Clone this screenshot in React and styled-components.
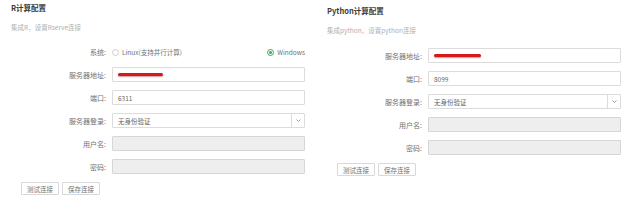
import React from 'react'
import styled, { createGlobalStyle } from 'styled-components'

const GlobalStyle = createGlobalStyle`
  html, body {
    margin: 0;
    padding: 0;
    background: #fff;
  }
  body {
    font-family: "Noto Sans CJK SC", "Liberation Sans", sans-serif;
    -webkit-font-smoothing: antialiased;
  }
`;

const Page = styled.div`
  display: grid;
  grid-template-columns: 316px 316px;
  padding-left: 1px;
  width: 640px;
  height: 203px;
  box-sizing: border-box;
  overflow: hidden;
`;

const Panel = styled.section`
  padding-top: ${(p) => p.$offset}px;
`;

const Title = styled.h3`
  margin: 0 0 0 10px;
  padding-top: 3px;
  font-size: 7.5px;
  line-height: 10px;
  font-weight: 700;
  color: #3a3a3a;
`;

const Subtitle = styled.p`
  margin: 9px 0 0 10px;
  font-size: 6.5px;
  line-height: 10px;
  color: #b0b0b0;
`;

const Form = styled.div`
  margin-top: 13px;
`;

const Row = styled.div`
  display: grid;
  grid-template-columns: 105px 193px;
  column-gap: 6px;
  align-items: center;
  height: ${(p) => (p.$tall ? 14 : 15)}px;
  margin-bottom: 8px;
`;

const Label = styled.label`
  text-align: right;
  font-size: 7px;
  color: #707070;
  white-space: nowrap;
`;

const Input = styled.div`
  height: 15px;
  box-sizing: border-box;
  border: 1px solid ${(p) => (p.$disabled ? '#d6d6d6' : '#dcdcdc')};
  background: ${(p) => (p.$disabled ? '#eeeeee' : '#fff')};
  border-radius: 1px;
  display: flex;
  align-items: center;
  padding-left: 5px;
  font-size: 6.5px;
  color: #666;
`;

const Scribble = styled.span`
  display: inline-block;
  width: ${(p) => p.$w}px;
  height: 3px;
  border-radius: 2px;
  background: #d41a1a;
  box-shadow: 0 1px 1.5px rgba(120, 0, 0, 0.4);
`;

const Select = styled(Input)`
  padding-right: 0;
  justify-content: space-between;
`;

const Caret = styled.span`
  width: 12px;
  height: 100%;
  border-left: 1px solid #dcdcdc;
  display: flex;
  align-items: center;
  justify-content: center;
`;

const Radios = styled.div`
  display: flex;
  justify-content: space-between;
  align-items: center;
`;

const RadioItem = styled.span`
  display: flex;
  align-items: center;
  gap: 3px;
  font-size: 6.5px;
  color: #707070;
`;

const RadioDot = styled.span`
  width: 7px;
  height: 7px;
  box-sizing: border-box;
  border-radius: 50%;
  border: 1px solid ${(p) => (p.$on ? '#3aa655' : '#d0d0d0')};
  display: flex;
  align-items: center;
  justify-content: center;

  &::after {
    content: '';
    width: 3px;
    height: 3px;
    border-radius: 50%;
    background: ${(p) => (p.$on ? '#3aa655' : 'transparent')};
  }
`;

const Buttons = styled.div`
  display: flex;
  gap: 3px;
  margin: 5px 0 0 20px;
`;

const Button = styled.button`
  width: 38px;
  height: 13px;
  padding: 0;
  border: 1px solid #d9d9d9;
  background: #fff;
  border-radius: 1px;
  font-family: inherit;
  font-size: 6.5px;
  color: #707070;
`;

function Chevron() {
  return (
    <svg width="5" height="3" viewBox="0 0 5 3">
      <path d="M0.5 0.5 L2.5 2.5 L4.5 0.5" fill="none" stroke="#888" strokeWidth="0.8" />
    </svg>
  );
}

function ServerFields({ port, scribble }) {
  return (
    <>
      <Row>
        <Label>服务器地址:</Label>
        <Input><Scribble $w={scribble} /></Input>
      </Row>
      <Row>
        <Label>端口:</Label>
        <Input>{port}</Input>
      </Row>
      <Row>
        <Label>服务器登录:</Label>
        <Select>
          无身份验证
          <Caret><Chevron /></Caret>
        </Select>
      </Row>
      <Row>
        <Label>用户名:</Label>
        <Input $disabled />
      </Row>
      <Row>
        <Label>密码:</Label>
        <Input $disabled />
      </Row>
    </>
  );
}

export default function App() {
  return (
    <Page>
      <GlobalStyle />
      <Panel $offset={0}>
        <Title>R计算配置</Title>
        <Subtitle>集成R，设置Rserve连接</Subtitle>
        <Form>
          <Row $tall>
            <Label>系统:</Label>
            <Radios>
              <RadioItem><RadioDot />Linux(支持并行计算)</RadioItem>
              <RadioItem><RadioDot $on />Windows</RadioItem>
            </Radios>
          </Row>
          <ServerFields port="6311" scribble={45} />
        </Form>
        <Buttons>
          <Button>测试连接</Button>
          <Button>保存连接</Button>
        </Buttons>
      </Panel>
      <Panel $offset={3}>
        <Title>Python计算配置</Title>
        <Subtitle>集成python、设置python连接</Subtitle>
        <Form>
          <ServerFields port="8099" scribble={47} />
        </Form>
        <Buttons>
          <Button>测试连接</Button>
          <Button>保存连接</Button>
        </Buttons>
      </Panel>
    </Page>
  );
}
